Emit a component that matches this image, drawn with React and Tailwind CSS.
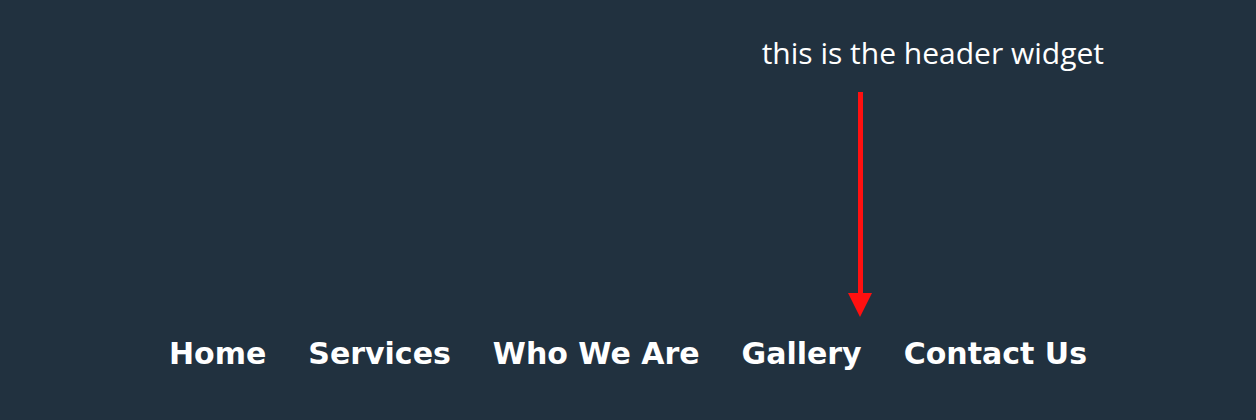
import React from 'react';

const navItems = ['Home', 'Services', 'Who We Are', 'Gallery', 'Contact Us'];

export default function App() {
  return (
    <div className="relative h-[420px] w-full overflow-hidden bg-[#21313f]">
      {/* caption */}
      <div className="flex justify-end pr-[152px] pt-[33px]">
        <p className="text-[30px] leading-[40px] text-white" style={{ fontFamily: '"Open Sans", sans-serif' }}>
          this is the header widget
        </p>
      </div>

      {/* red arrow pointing at the nav */}
      <svg className="absolute left-[846px] top-[92px]" width="28" height="226" viewBox="0 0 28 226">
        <rect x="12" y="0" width="5" height="204" fill="#ff1010" />
        <polygon points="2,201 26,201 14,225" fill="#ff1010" />
      </svg>

      {/* nav */}
      <nav className="mt-[261px] flex justify-center gap-[42px]">
        {navItems.map((item) => (
          <a
            key={item}
            href="#"
            className="text-[30px] font-bold leading-[40px] text-white"
            style={{ fontFamily: '"DejaVu Sans", sans-serif' }}
          >
            {item}
          </a>
        ))}
      </nav>
    </div>
  );
}
